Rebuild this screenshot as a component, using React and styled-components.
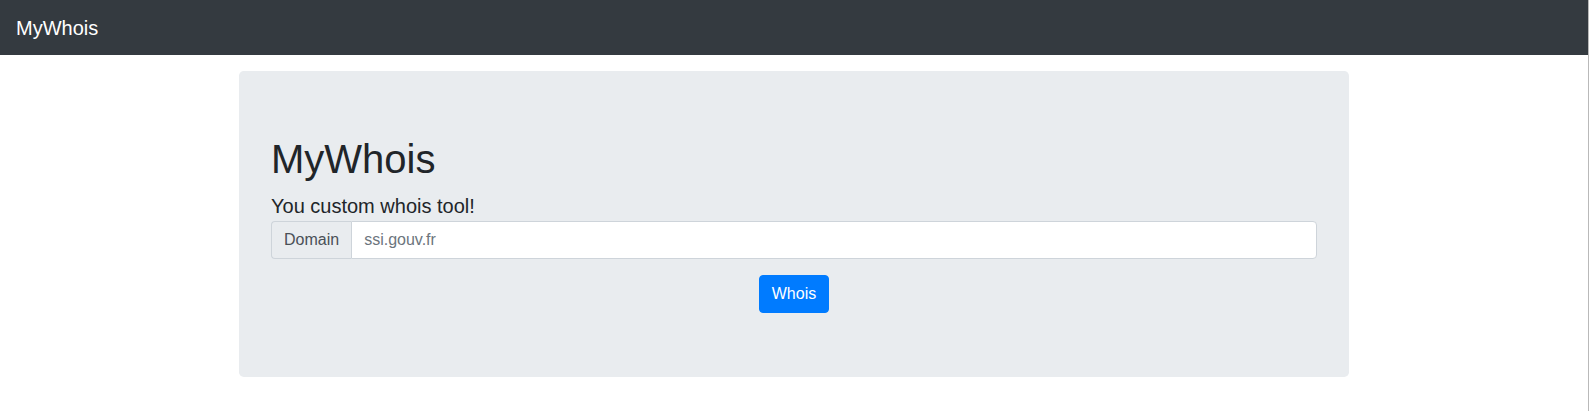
import React from "react";
import styled, { createGlobalStyle } from "styled-components";

const Global = createGlobalStyle`
  html, body { margin: 0; padding: 0; }
  body {
    font-family: "Liberation Sans", Arial, sans-serif;
    font-size: 16px;
    line-height: 1.5;
    color: #212529;
    background: #fff;
    border-right: 1px solid #b9b9b9;
    min-height: 411px;
    box-sizing: border-box;
  }
  *, *::before, *::after { box-sizing: border-box; }
`;

const Navbar = styled.nav`
  display: flex;
  align-items: center;
  height: 55px;
  padding: 0 16px;
  background: #343a40;
`;

const Brand = styled.a`
  font-size: 20px;
  line-height: 30px;
  color: #fff;
  text-decoration: none;
`;

const Container = styled.div`
  width: 1110px;
  margin: 16px auto 0;
`;

const Jumbotron = styled.div`
  background: #e9ecef;
  border-radius: 4.8px;
  padding: 64px 32px;
  display: flex;
  flex-direction: column;
`;

const Title = styled.h1`
  margin: 0 0 8px;
  font-size: 40px;
  font-weight: 500;
  line-height: 1.2;
  color: #212529;
`;

const Lead = styled.p`
  margin: 0;
  font-size: 20px;
  line-height: 30px;
`;

const InputGroup = styled.div`
  display: flex;
  height: 38px;
`;

const Addon = styled.span`
  display: flex;
  align-items: center;
  padding: 0 12px;
  background: #e9ecef;
  border: 1px solid #ced4da;
  border-right: 0;
  border-radius: 4px 0 0 4px;
  color: #495057;
  font-size: 16px;
`;

const Input = styled.input`
  flex: 1;
  padding: 6px 12px;
  border: 1px solid #ced4da;
  border-radius: 0 4px 4px 0;
  font-family: "Liberation Sans", Arial, sans-serif;
  font-size: 16px;
  color: #495057;
  background: #fff;
  outline: none;
  &::placeholder { color: #6c757d; }
`;

const ButtonRow = styled.div`
  display: flex;
  justify-content: center;
  margin-top: 16px;
`;

const Button = styled.button`
  height: 38px;
  padding: 6px 12px;
  background: #007bff;
  border: 1px solid #007bff;
  border-radius: 4px;
  color: #fff;
  font-family: "Liberation Sans", Arial, sans-serif;
  font-size: 16px;
  line-height: 24px;
  cursor: pointer;
`;

export default function App() {
  return (
    <>
      <Global />
      <Navbar>
        <Brand href="#">MyWhois</Brand>
      </Navbar>
      <Container>
        <Jumbotron>
          <Title>MyWhois</Title>
          <Lead>You custom whois tool!</Lead>
          <InputGroup>
            <Addon>Domain</Addon>
            <Input placeholder="ssi.gouv.fr" />
          </InputGroup>
          <ButtonRow>
            <Button>Whois</Button>
          </ButtonRow>
        </Jumbotron>
      </Container>
    </>
  );
}
